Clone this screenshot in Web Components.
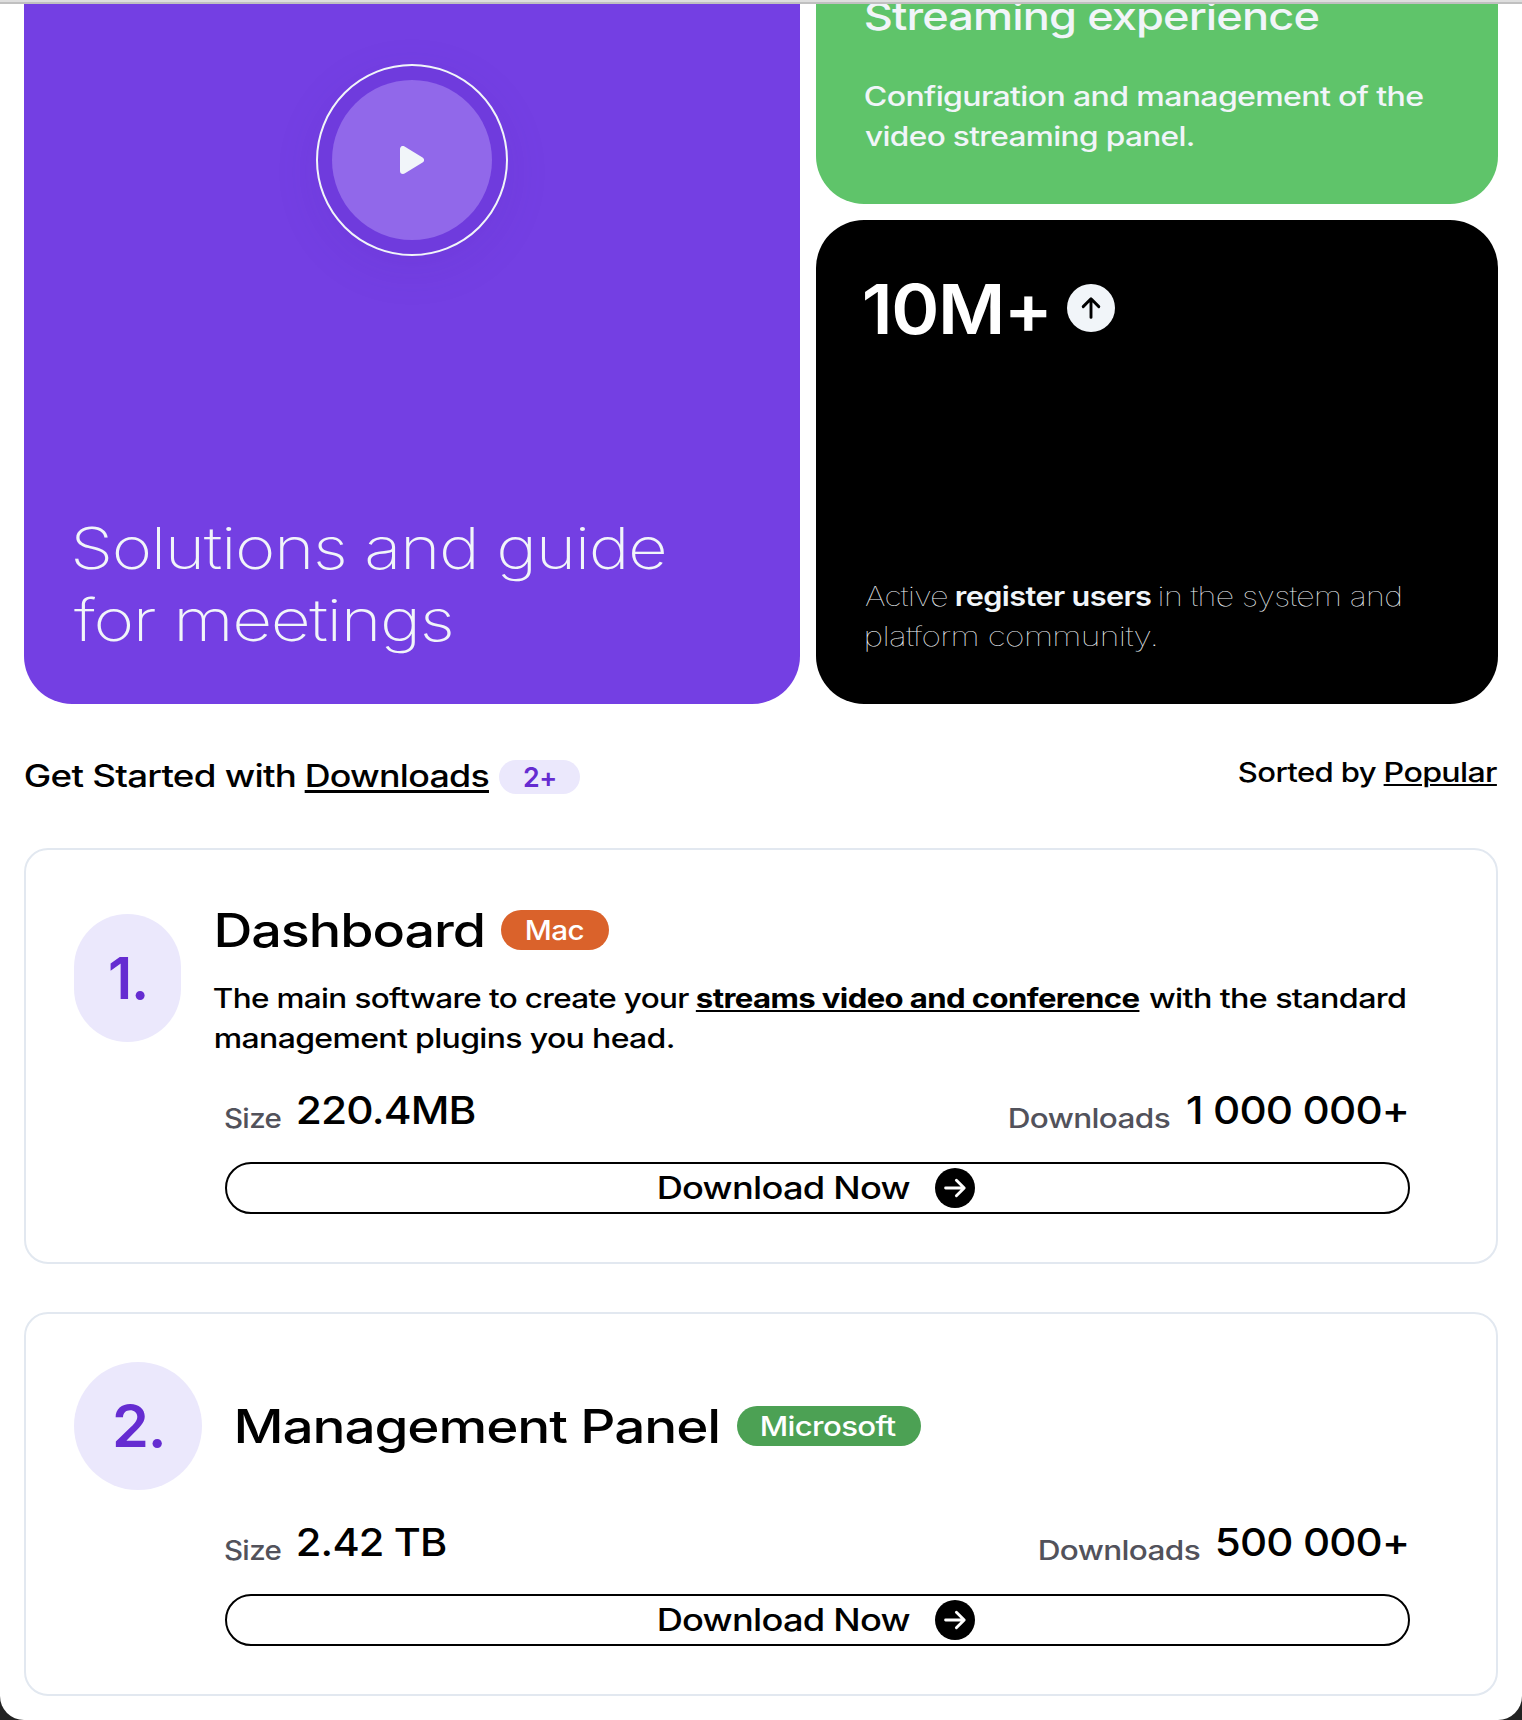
<!DOCTYPE html>
<html lang="en">
<head>
<meta charset="utf-8">
<title>Downloads</title>
<style>
html,body{margin:0;background:#222;}
body{width:1522px;height:1720px;overflow:hidden;font-family:Inter,"Open Sans",sans-serif;}
</style>
</head>
<body>
<app-page></app-page>
<script>
const ctx = document.createElement('canvas').getContext('2d');

/* Text stretched so its inked width equals the "w" attribute. */
class FitText extends HTMLElement {
  connectedCallback() {
    const nominal = +this.getAttribute('size');
    const size = nominal * 0.963;
    const weight = this.getAttribute('weight') || '540';
    const w = +this.getAttribute('w');
    const lh = this.getAttribute('lh') || '40';
    const u = this.getAttribute('u');
    const drop = nominal === 28 || nominal === 72 ? 1 : 0;
    const track = (-0.02 * size).toFixed(2);
    const text = this.textContent;
    ctx.font = `${weight} ${size}px Inter, "Open Sans", sans-serif`;
    ctx.letterSpacing = `${track}px`;
    const m = ctx.measureText(text);
    const ink = m.actualBoundingBoxLeft + m.actualBoundingBoxRight;
    const k = w / ink;
    const root = this.attachShadow({ mode: 'open' });
    root.innerHTML = `<style>
      :host{display:block;flex:none;width:${w}px;height:${lh}px;line-height:${lh}px;font-size:${size}px;font-weight:${weight};letter-spacing:${track}px;white-space:nowrap}
      span{display:inline-block;transform-origin:0 0;transform:translate(${m.actualBoundingBoxLeft * k}px,${drop}px) scaleX(${k});
      ${u ? `text-decoration:underline;text-decoration-thickness:${u}px;text-underline-offset:${u > 2 ? 3 : 2}px;` : ''}}
    </style><span><slot></slot></span>`;
  }
}
customElements.define('fit-text', FitText);

class ArrowDot extends HTMLElement {
  connectedCallback() {
    const up = this.hasAttribute('up');
    this.attachShadow({ mode: 'open' }).innerHTML = `<style>
      :host{display:flex;flex:none;align-items:center;justify-content:center;border-radius:50%;
        width:${up ? 48 : 40}px;height:${up ? 48 : 40}px;background:${up ? '#f1f5f9' : '#000'};color:${up ? '#000' : '#fff'}}
      svg{display:block;${up ? 'transform:rotate(-90deg)' : ''}}
    </style><svg width="24" height="24" viewBox="0 0 24 24" fill="none" stroke="currentColor" stroke-width="2.9" stroke-linecap="round" stroke-linejoin="round"><path d="M2.6 12H21M13.4 4.2 21.2 12l-7.8 7.8"/></svg>`;
  }
}
customElements.define('arrow-dot', ArrowDot);

class PlayButton extends HTMLElement {
  connectedCallback() {
    this.attachShadow({ mode: 'open' }).innerHTML = `<style>
      :host{display:flex;box-sizing:border-box;width:192px;height:192px;border:2px solid #f1f5f9;border-radius:50%;
        align-items:center;justify-content:center;box-shadow:0 12px 50px -6px rgba(70,30,160,.13),inset 0 0 0 96px rgba(95,45,200,.22)}
      div{width:160px;height:160px;border-radius:50%;background:#9168ea;display:flex;align-items:center;justify-content:center}
    </style><div><svg width="24" height="28" viewBox="0 0 24 28"><path d="M3 3V25L21 14Z" fill="#f1f5f9" stroke="#f1f5f9" stroke-width="6" stroke-linejoin="round"/></svg></div>`;
  }
}
customElements.define('play-button', PlayButton);

class TagPill extends HTMLElement {
  connectedCallback() {
    this.attachShadow({ mode: 'open' }).innerHTML = `<style>
      :host{display:flex;flex:none;align-items:center;justify-content:center;height:40px;border-radius:20px;color:#fff}
    </style><slot></slot>`;
  }
}
customElements.define('tag-pill', TagPill);

class BentoGrid extends HTMLElement {
  connectedCallback() {
    this.attachShadow({ mode: 'open' }).innerHTML = `<style>
      :host{display:flex;gap:16px;height:700px;padding:0 24px;color:#f1f5f9}
      .video{width:776px;box-sizing:border-box;background:#743fe3;border-radius:0 0 48px 48px;padding:60px 48px 48px;display:flex;flex-direction:column;justify-content:space-between}
      play-button{align-self:center}
      .side{flex:1;display:flex;flex-direction:column;gap:16px}
      .green{height:200px;box-sizing:border-box;overflow:hidden;background:#5fc46a;border-radius:0 0 48px 48px;padding:0 48px 48px;display:flex;flex-direction:column;justify-content:flex-end}
      .title{margin-bottom:36px}
      .black{flex:1;background:#000;border-radius:48px;padding:48px;display:flex;flex-direction:column;justify-content:space-between}
      .row{display:flex}
      .count{align-items:center;gap:20px}
      fit-text{margin-left:1px}
      .row fit-text+fit-text{margin-left:9px}
    </style>
    <div class="video"><play-button></play-button>
      <div><fit-text size="60" weight="220" lh="72" w="590" style="margin-left:3px">Solutions and guide</fit-text>
      <fit-text size="60" weight="220" lh="72" w="377" style="margin-left:2px">for meetings</fit-text></div>
    </div>
    <div class="side">
      <div class="green">
        <fit-text class="title" size="40" lh="48" w="453">Streaming experience</fit-text>
        <fit-text size="28" w="558">Configuration and management of the</fit-text>
        <fit-text size="28" w="329">video streaming panel.</fit-text>
      </div>
      <div class="black">
        <div class="row count"><fit-text size="72" weight="600" lh="80" w="182" style="color:#fff">10M+</fit-text><arrow-dot up></arrow-dot></div>
        <div>
          <div class="row"><fit-text size="28" weight="120" w="82">Active</fit-text><fit-text size="28" weight="600" w="195">register users</fit-text><fit-text size="28" weight="120" w="241">in the system and</fit-text></div>
          <fit-text size="28" weight="120" w="290" style="margin-left:2px">platform community.</fit-text>
        </div>
      </div>
    </div>`;
  }
}
customElements.define('bento-grid', BentoGrid);

class SectionHead extends HTMLElement {
  connectedCallback() {
    this.attachShadow({ mode: 'open' }).innerHTML = `<style>
      :host{display:flex;justify-content:space-between;align-items:flex-start;height:48px;padding:48px 24px 48px 25px}
      .row{display:flex}
      tag-pill{width:81px;height:34px;border-radius:17px;background:#ebe8fc;color:#652cd1;margin:8px 0 0 9px}
    </style>
    <div class="row"><fit-text size="32" lh="48" w="270" style="margin-right:12px">Get Started with</fit-text><fit-text size="32" lh="48" w="182" u="3" style="margin-right:1px">Downloads</fit-text><tag-pill><fit-text size="28" weight="600" lh="34" w="31">2+</fit-text></tag-pill></div>
    <div class="row"><fit-text size="28" w="137" style="margin-right:10px">Sorted by</fit-text><fit-text size="28" w="111" u="2" style="margin-right:1px">Popular</fit-text></div>`;
  }
}
customElements.define('section-head', SectionHead);

class DownloadButton extends HTMLElement {
  connectedCallback() {
    this.attachShadow({ mode: 'open' }).innerHTML = `<style>
      :host{display:flex;box-sizing:border-box;height:52px;border:2px solid #000;border-radius:26px;align-items:center;justify-content:center;gap:25px;padding-right:1px}
    </style><fit-text size="32" lh="48" w="251">Download Now</fit-text><arrow-dot></arrow-dot>`;
  }
}
customElements.define('download-button', DownloadButton);

class DownloadCard extends HTMLElement {
  connectedCallback() {
    this.attachShadow({ mode: 'open' }).innerHTML = `<style>
      :host{display:flex;flex-direction:column;gap:24px;box-sizing:border-box;margin:0 24px 48px;border:2px solid #e2e8f0;border-radius:24px;padding:48px}
      .head{display:flex;align-items:center}
      .badge{display:flex;align-items:center;justify-content:center;flex:none;height:128px;border-radius:64px;background:#ebe8fc;color:#652cd1;width:var(--badge,128px)}
      .body{margin-left:151px;width:1185px;display:flex;flex-direction:column;gap:24px}
      .stats{display:flex;justify-content:space-between;margin-right:3px}
      .stat{display:flex;align-items:flex-end;gap:17px}
      ::slotted(.label){color:#52525b}
    </style>
    <div class="head"><div class="badge"><slot name="num"></slot></div><slot name="info"></slot></div>
    <div class="body">
      <div class="stats"><div class="stat"><slot name="size"></slot></div><div class="stat"><slot name="count"></slot></div></div>
      <download-button></download-button>
    </div>`;
  }
}
customElements.define('download-card', DownloadCard);

class AppPage extends HTMLElement {
  connectedCallback() {
    this.attachShadow({ mode: 'open' }).innerHTML = `<style>
      :host{display:flex;flex-direction:column;width:1522px;height:1720px;overflow:hidden;background:#fff;border-radius:0 0 24px 24px;color:#000}
      .bar{flex:none;height:2px;background:#dedede;border-bottom:2px solid #c0c0c0}
      bento-grid,section-head,download-card{flex:none}
      .row{display:flex;align-items:center}
      .info1{margin-left:33px}
      .name{height:64px;margin:0 0 16px 3px;gap:18px}
      .info2{margin-left:35px;gap:19px}
    </style>
    <div class="bar"></div>
    <bento-grid></bento-grid>
    <section-head></section-head>
    <download-card style="--badge:107px">
      <fit-text slot="num" size="60" weight="600" lh="72" w="35">1.</fit-text>
      <div slot="info" class="info1">
        <div class="row name"><fit-text size="48" lh="64" w="266">Dashboard</fit-text><tag-pill style="width:108px;background:#da622b"><fit-text size="28" w="57">Mac</fit-text></tag-pill></div>
        <div class="row"><fit-text size="28" w="475">The main software to create your</fit-text><fit-text size="28" weight="700" w="443" u="2" style="margin:0 9px 0 8px">streams video and conference</fit-text><fit-text size="28" w="256">with the standard</fit-text></div>
        <fit-text size="28" w="459" style="margin-left:1px">management plugins you head.</fit-text>
      </div>
      <fit-text slot="size" class="label" size="28" w="56">Size</fit-text><fit-text slot="size" size="40" lh="56" w="177">220.4MB</fit-text>
      <fit-text slot="count" class="label" size="28" w="160">Downloads</fit-text><fit-text slot="count" size="40" lh="56" w="220">1 000 000+</fit-text>
    </download-card>
    <download-card>
      <fit-text slot="num" size="60" weight="600" lh="72" w="47">2.</fit-text>
      <div slot="info" class="row info2"><fit-text size="48" lh="64" w="481">Management Panel</fit-text><tag-pill style="width:184px;background:#4ca154"><fit-text size="28" w="134">Microsoft</fit-text></tag-pill></div>
      <fit-text slot="size" class="label" size="28" w="56">Size</fit-text><fit-text slot="size" size="40" lh="56" w="148">2.42 TB</fit-text>
      <fit-text slot="count" class="label" size="28" w="160">Downloads</fit-text><fit-text slot="count" size="40" lh="56" w="190">500 000+</fit-text>
    </download-card>`;
  }
}
customElements.define('app-page', AppPage);
</script>
</body>
</html>
